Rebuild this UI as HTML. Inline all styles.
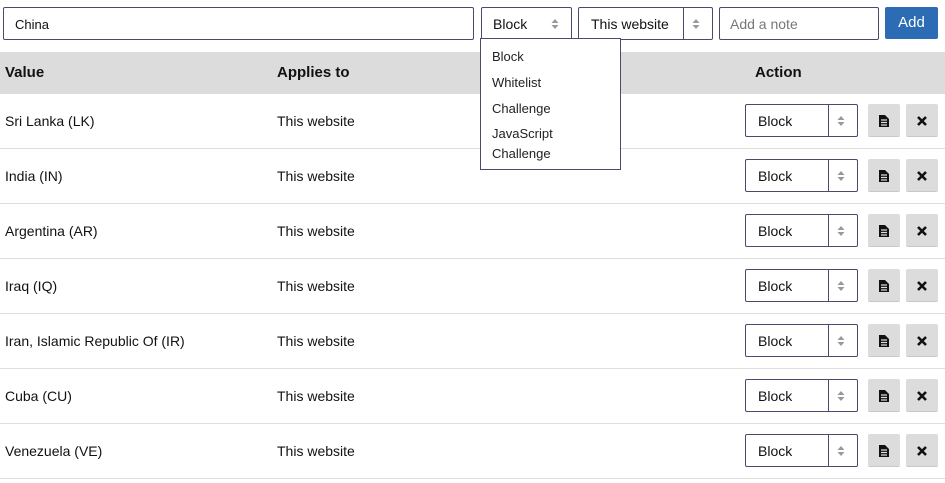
<!DOCTYPE html><html><head><style>
*{box-sizing:border-box;margin:0;padding:0}
body{width:945px;height:483px;background:#fff;font-family:"Liberation Sans",sans-serif;font-size:14px;color:#111;position:relative;overflow:hidden}
.a{position:absolute}
.box{position:absolute;border:1px solid #4a4a6a;border-radius:2px;background:#fff}
.arr{position:absolute;width:10px;height:14px}
.row{position:absolute;left:0;width:945px;height:55px;border-bottom:1px solid #dedede}
.row span{position:absolute;top:19px}
.btn{position:absolute;top:10px;width:32px;height:33px;background:#dcdcdc;border-radius:2px;border-bottom:1px solid #c8c8c8}
</style></head><body>
<div class="box" style="left:3px;top:7px;width:471px;height:33px"><span class="a" style="left:11px;top:9px;font-size:13px">China</span></div>
<div class="box" style="left:481px;top:7px;width:91px;height:33px"><span class="a" style="left:11px;top:8px">Block</span>
<svg class="arr" style="left:68px;top:9px" viewBox="0 0 10 14"><path d="M1.5 6L5 2L8.5 6ZM1.5 8L5 12L8.5 8Z" fill="#999"/></svg></div>
<div class="box" style="left:578px;top:7px;width:135px;height:33px"><span class="a" style="left:12px;top:8px">This website</span>
<div class="a" style="left:104px;top:0;width:1px;height:31px;background:#4a4a6a"></div>
<svg class="arr" style="left:112px;top:9px" viewBox="0 0 10 14"><path d="M1.5 6L5 2L8.5 6ZM1.5 8L5 12L8.5 8Z" fill="#999"/></svg></div>
<div class="box" style="left:719px;top:7px;width:160px;height:33px"><span class="a" style="left:10px;top:8px;color:#777">Add a note</span></div>
<div class="a" style="left:885px;top:7px;width:53px;height:32px;background:#2b6cb5;border-radius:2px;color:#fff;font-size:15px;text-align:center;line-height:32px">Add</div>
<div class="a" style="left:0;top:52px;width:945px;height:42px;background:#dcdcdc;font-size:15px;font-weight:bold">
<span class="a" style="left:5px;top:12px">Value</span><span class="a" style="left:277px;top:12px">Applies to</span><span class="a" style="left:755px;top:12px">Action</span></div>
<div id="rows"></div>
<script>
var n=["Sri Lanka (LK)","India (IN)","Argentina (AR)","Iraq (IQ)","Iran, Islamic Republic Of (IR)","Cuba (CU)","Venezuela (VE)"],h="";
n.forEach(function(v,i){h+='<div class="row" style="top:'+(94+55*i)+'px"><span style="left:5px">'+v+'</span><span style="left:277px">This website</span>'+
'<div class="box" style="left:745px;top:10px;width:113px;height:33px"><span class="a" style="left:12px;top:8px">Block</span><div class="a" style="left:82px;top:0;width:1px;height:31px;background:#4a4a6a"></div><svg class="arr" style="left:90px;top:9px" viewBox="0 0 10 14"><path d="M1.5 6L5 2L8.5 6ZM1.5 8L5 12L8.5 8Z" fill="#999"/></svg></div>'+
'<div class="btn" style="left:868px"><svg class="a" style="left:11px;top:11px" width="10" height="12" viewBox="0 0 10 12"><path d="M0 0H6L10 4V12H0Z" fill="#111"/><path d="M2 5H8M2 7.5H8M2 10H8" stroke="#dcdcdc" stroke-width="1.2"/></svg></div>'+
'<div class="btn" style="left:906px"><svg class="a" style="left:10px;top:11px" width="12" height="12" viewBox="0 0 12 12"><path d="M2 2L10 10M10 2L2 10" stroke="#111" stroke-width="2.6"/></svg></div></div>'});
document.getElementById("rows").innerHTML=h;
</script>
<div class="a" style="left:480px;top:38px;width:141px;height:132px;border:1px solid #4a4a6a;background:#fff;font-size:13px;color:#222;z-index:5">
<span class="a" style="left:11px;top:10px">Block</span><span class="a" style="left:11px;top:36px">Whitelist</span><span class="a" style="left:11px;top:62px">Challenge</span><span class="a" style="left:11px;top:85px;line-height:20px">JavaScript<br>Challenge</span></div>
</body></html>
